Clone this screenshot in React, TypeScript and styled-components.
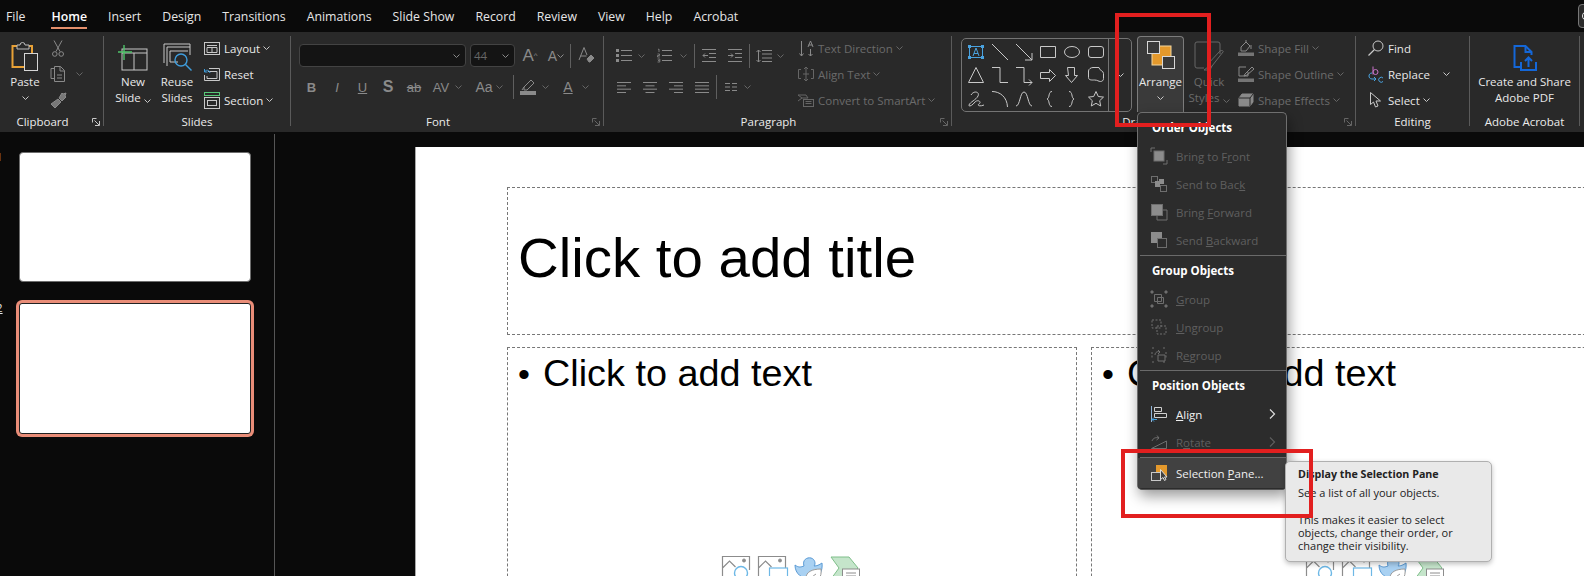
import React from "react";
import styled, { createGlobalStyle } from "styled-components";

const ON = "#c8c8c8";
const OFF = "#8a8a8a";
const DIM = "#666666";
const FONT = `"Open Sans", "Noto Sans", "Liberation Sans", sans-serif`;

const GlobalStyle = createGlobalStyle`
  html, body { margin: 0; padding: 0; background: #0a0a0a; overflow: hidden; }
  body { font-family: ${FONT}; font-size: 12px; }
  * { box-sizing: border-box; }
`;

const Page = styled.div`
  position: relative;
  width: 1584px;
  height: 576px;
  overflow: hidden;
  background: #0a0a0a;
`;

/* ---------- tabs ---------- */
const TabBar = styled.div`
  height: 32px;
  display: flex;
  align-items: center;
  padding-left: 6px;
  gap: 21px;
  color: #ececec;
  font-size: 12.3px;
  overflow: hidden;
`;
const Tab = styled.div<{ $active?: boolean; $first?: boolean }>`
  position: relative;
  height: 32px;
  line-height: 34px;
  white-space: nowrap;
  margin-right: ${(p) => (p.$first ? 5 : 0)}px;
  color: ${(p) => (p.$active ? "#ffffff" : "#e6e6e6")};
  font-weight: ${(p) => (p.$active ? 600 : 400)};
  ${(p) =>
    p.$active &&
    `&::after { content: ""; position: absolute; left: 0; right: 0; bottom: 3px; height: 2px; background: #e48f6c; }`}
`;
const AccountStub = styled.div`
  flex: none;
  margin-left: auto;
  margin-right: -22px;
  width: 28px;
  height: 24px;
  padding: 6px 0 0 3px;
  border: 1px solid #777;
  border-radius: 4px;
  background: #2b2b2b;
`;

/* ---------- ribbon ---------- */
const Ribbon = styled.div`
  height: 100px;
  padding-top: 4px;
  background: #292929;
  display: flex;
  align-items: flex-start;
`;
const GroupBox = styled.div<{ $w: number; $last?: boolean }>`
  flex: none;
  width: ${(p) => p.$w}px;
  height: 90px;
  display: flex;
  flex-direction: column;
  border-right: 1px solid #5a5a5a;
`;
const GroupBody = styled.div<{ $pl?: number }>`
  height: 76px;
  flex: none;
  display: flex;
  padding-left: ${(p) => p.$pl ?? 0}px;
`;
const GroupFooter = styled.div`
  height: 18px;
  flex: none;
  display: flex;
  align-items: center;
`;
const GroupLabel = styled.div`
  flex: 1;
  text-align: center;
  color: #ebebeb;
  font-size: 11.5px;
  white-space: nowrap;
`;
const Launcher = styled.div`
  flex: none;
  width: 18px;
  display: flex;
  justify-content: flex-end;
  padding: 2px 3px 0 0;
`;
const Glyph = styled.svg`
  display: block;
  flex: none;
  fill: none;
  overflow: visible;
`;

const Icon: React.FC<{ w: number; h: number; c?: string; children: React.ReactNode }> = ({ w, h, c = ON, children }) => (
  <Glyph width={w} height={h} viewBox={`0 0 ${w} ${h}`} stroke={c}>
    {children}
  </Glyph>
);

const Chevron: React.FC<{ c?: string }> = ({ c = ON }) => (
  <Icon w={7} h={4} c={c}>
    <path d="M.5.5l3 3 3-3" />
  </Icon>
);
const LaunchIcon: React.FC<{ c?: string }> = ({ c = ON }) => (
  <Icon w={8} h={8} c={c}>
    <path d="M7.5 3v4.5H3M.5.5h4M.5.5v4M2.5 2.5l4.5 4.5" />
  </Icon>
);

const Group: React.FC<{
  w: number;
  label: string;
  pl?: number;
  launcher?: string;
  children: React.ReactNode;
}> = ({ w, label, pl, launcher, children }) => (
  <GroupBox $w={w}>
    <GroupBody $pl={pl}>{children}</GroupBody>
    <GroupFooter>
      <GroupLabel>{label}</GroupLabel>
      {launcher && (
        <Launcher>
          <LaunchIcon c={launcher} />
        </Launcher>
      )}
    </GroupFooter>
  </GroupBox>
);

const BigButton = styled.div<{ $w: number; $ml?: number; $off?: boolean; $open?: boolean }>`
  flex: none;
  width: ${(p) => p.$w}px;
  margin-left: ${(p) => p.$ml ?? 0}px;
  height: 76px;
  display: flex;
  flex-direction: column;
  align-items: center;
  color: ${(p) => (p.$off ? "#6b6b6b" : "#e8e8e8")};
  line-height: 16px;
  font-size: 11.5px;
  text-align: center;
  white-space: nowrap;
  ${(p) => p.$open && `background: #3a3a3a; border: 1px solid #7c7c7c; border-bottom: 0; border-radius: 4px 4px 0 0;`}
`;
const BigIcon = styled.div<{ $open?: boolean }>`
  height: ${(p) => (p.$open ? 37 : 38)}px;
  flex: none;
  display: flex;
  align-items: flex-end;
  padding-bottom: ${(p) => (p.$open ? 5 : 3)}px;
`;
const BigChevron = styled.div`
  height: 16px;
  display: flex;
  align-items: center;
  justify-content: center;
`;
const InlineChevron = styled.span`
  display: inline-block;
  margin-left: 3px;
  vertical-align: middle;
  svg { display: inline-block; }
`;

const RowStack = styled.div<{ $ml?: number; $w?: number }>`
  flex: none;
  width: ${(p) => (p.$w ? `${p.$w}px` : "auto")};
  margin: -1px 0 0 ${(p) => p.$ml ?? 0}px;
  display: flex;
  flex-direction: column;
`;
const SmallRow = styled.div<{ $off?: boolean }>`
  flex: none;
  height: 26px;
  display: flex;
  align-items: center;
  gap: 4px;
  white-space: nowrap;
  font-size: 11.5px;
  color: ${(p) => (p.$off ? "#6b6b6b" : "#e8e8e8")};
`;
const IconSlot = styled.div`
  width: 16px;
  flex: none;
  display: flex;
  justify-content: center;
`;
const TextChevron = styled.span`
  margin-left: -1px;
`;

const FontStack = styled.div`
  display: flex;
  flex-direction: column;
  gap: 8px;
  padding-top: 8px;
`;
const ToolRow = styled.div<{ $h?: number }>`
  height: ${(p) => p.$h ?? 24}px;
  display: flex;
  align-items: center;
`;
const Cell = styled.div<{ $w: number; $ml?: number }>`
  flex: none;
  width: ${(p) => p.$w}px;
  margin-left: ${(p) => p.$ml ?? 0}px;
  display: flex;
  align-items: center;
  justify-content: center;
  color: ${OFF};
  white-space: nowrap;
`;
const Sep = styled.div<{ $ml?: number; $h?: number }>`
  flex: none;
  width: 1px;
  height: ${(p) => p.$h ?? 24}px;
  margin-left: ${(p) => p.$ml ?? 0}px;
  background: #5f5f5f;
`;
const Combo = styled.div<{ $w: number; $ml?: number }>`
  flex: none;
  width: ${(p) => p.$w}px;
  margin-left: ${(p) => p.$ml ?? 0}px;
  height: 23px;
  padding: 0 5px 0 3px;
  display: flex;
  align-items: center;
  justify-content: space-between;
  background: #141414;
  border: 1px solid #434343;
  border-radius: 4px;
  color: #666;
  font-size: 11.5px;
`;
const FontGlyph = styled.span<{ $size?: number; $bold?: boolean; $italic?: boolean; $under?: boolean; $strike?: boolean }>`
  font-family: "Liberation Sans", sans-serif;
  font-size: ${(p) => p.$size ?? 12}px;
  font-weight: ${(p) => (p.$bold ? 700 : 400)};
  font-style: ${(p) => (p.$italic ? "italic" : "normal")};
  text-decoration: ${(p) => (p.$under ? "underline" : p.$strike ? "line-through" : "none")};
  line-height: 1;
`;

const Gallery = styled.div`
  flex: none;
  margin-top: 2px;
  width: 171px;
  height: 74px;
  display: flex;
  border: 1px solid #747474;
  border-radius: 5px;
`;
const GalleryGrid = styled.div`
  width: 146px;
  padding: 1px 0 0 2px;
  display: grid;
  grid-template-columns: repeat(6, 24px);
  grid-auto-rows: 23.5px;
  align-items: center;
  justify-items: center;
`;
const GalleryMore = styled.div`
  flex: 1;
  border-left: 1px solid #747474;
  display: flex;
  align-items: center;
  justify-content: center;
`;

/* ---------- workspace ---------- */
const Workspace = styled.div`
  height: 444px;
  display: flex;
  background: #0a0a0a;
`;
const SlidePanel = styled.div`
  flex: none;
  width: 275px;
  margin-top: 2px;
  padding-top: 18px;
  border-right: 1px solid #555;
  display: flex;
  flex-direction: column;
  gap: 21px;
  overflow: hidden;
`;
const ThumbRow = styled.div`
  display: flex;
  align-items: flex-start;
`;
const ThumbNumber = styled.div<{ $active?: boolean }>`
  flex: none;
  width: 20px;
  margin: -3px 3px 0 -4px;
  color: #e6e6e6;
  font-size: 11.5px;
  line-height: 15px;
  text-decoration: ${(p) => (p.$active ? "underline" : "none")};
`;
const Thumb = styled.div<{ $active?: boolean }>`
  flex: none;
  width: 232px;
  height: ${(p) => (p.$active ? 131 : 130)}px;
  background: #ffffff;
  border-radius: 4px;
  border: 1px solid #6d6d6d;
  ${(p) => p.$active && `border-color: #222; box-shadow: 0 0 0 3px #e98d78; border-radius: 3px;`}
`;
const Stage = styled.div`
  flex: 1;
  min-width: 0;
  padding: 15px 0 0 140px;
  overflow: hidden;
`;
const Slide = styled.div`
  width: 1300px;
  height: 600px;
  padding: 40px 0 0 91px;
  background: #ffffff;
  border-left: 1px solid #a8a8a8;
  font-family: "Liberation Sans", Arial, sans-serif;
  color: #000;
`;
const Placeholder = styled.div<{ $w: number; $h: number }>`
  flex: none;
  width: ${(p) => p.$w}px;
  height: ${(p) => p.$h}px;
  border: 1px dashed #777;
`;
const TitleBox = styled(Placeholder)`
  padding: 0 0 8px 10px;
  display: flex;
  align-items: center;
  font-size: 56.4px;
  white-space: nowrap;
`;
const Columns = styled.div`
  margin-top: 12px;
  display: flex;
  gap: 14px;
`;
const BodyLine = styled.div`
  padding: 4px 0 0 10px;
  height: 46px;
  line-height: 42px;
  font-size: 37.8px;
  white-space: nowrap;
`;
const Bullet = styled.span`
  display: inline-block;
  width: 25px;
  font-size: 34px;
`;
const ContentIcons = styled.div`
  margin-top: 162px;
  display: flex;
  justify-content: center;
  gap: 8px;
  padding-right: 2px;
`;

/* ---------- arrange menu ---------- */
const Menu = styled.div`
  position: absolute;
  left: 1137px;
  top: 112px;
  width: 150px;
  height: 378px;
  background: #2c2c2c;
  border: 1px solid #6f6f6f;
  border-bottom-color: #555;
  border-radius: 5px;
  box-shadow: 2px 6px 14px rgba(0, 0, 0, 0.4);
`;
const MenuHeader = styled.div`
  height: 29px;
  padding: 0 0 1px 14px;
  display: flex;
  align-items: center;
  color: #fff;
  font-weight: 700;
  font-size: 11.5px;
`;
const MenuItem = styled.div<{ $off?: boolean; $hot?: boolean }>`
  height: ${(p) => (p.$hot ? 30 : 28)}px;
  display: flex;
  align-items: center;
  font-size: 11.5px;
  white-space: nowrap;
  color: ${(p) => (p.$off ? "#5f5f5f" : "#f0f0f0")};
  background: ${(p) => (p.$hot ? "#414141" : "transparent")};
`;
const MenuIcon = styled.div`
  flex: none;
  width: 38px;
  padding-left: 13px;
`;
const MenuText = styled.div`
  flex: 1;
`;
const MenuArrow = styled.div`
  flex: none;
  width: 17px;
`;
const MenuDivider = styled.div`
  height: 1px;
  margin: 1px 0 0 2px;
  background: #6a6a6a;
`;

/* ---------- tooltip + annotations ---------- */
const Tooltip = styled.div`
  position: absolute;
  left: 1285px;
  top: 461px;
  width: 207px;
  height: 101px;
  padding: 6px 10px 0 12px;
  background: #e9e9e9;
  border: 1px solid #b0b0b0;
  border-radius: 5px;
  color: #222;
  font-size: 11px;
  line-height: 13px;
  box-shadow: 0 2px 5px rgba(0, 0, 0, 0.25);
`;
const TooltipTitle = styled.div`
  font-weight: 700;
  font-size: 10.7px;
  margin-bottom: 5px;
`;
const TooltipGap = styled.div`
  height: 14px;
`;
const RedFrame = styled.div<{ $x: number; $y: number; $w: number; $h: number }>`
  position: absolute;
  left: ${(p) => p.$x}px;
  top: ${(p) => p.$y}px;
  width: ${(p) => p.$w}px;
  height: ${(p) => p.$h}px;
  border: 4px solid #e21f1f;
`;

/* ---------- icons ---------- */
const Paste = () => (
  <Icon w={28} h={30}>
    <path d="M7 5H1.5v21H13M16 5h5v7" stroke="#e8a136" strokeWidth={2} />
    <path d="M6 8V4h3a2.5 2.5 0 0 1 5 0h4v4z" stroke="#bdbdbd" fill="#292929" />
    <rect x={13.5} y={12.5} width={13} height={17} stroke="#d6d6d6" fill="#292929" />
  </Icon>
);
const Cut = () => (
  <Icon w={12} h={17} c={OFF}>
    <path d="M2 .5l6 11M10 .5l-6 11" />
    <circle cx={2.8} cy={14} r={2.3} />
    <circle cx={9.2} cy={14} r={2.3} />
  </Icon>
);
const Copy = () => (
  <Icon w={16} h={16} c={OFF}>
    <path d="M5 2.5H1v10h3" />
    <path d="M4.5.5h6l4 4v11h-10zM10 .5v4.5h4.5M7 9h5M7 12h5" />
  </Icon>
);
const Painter = () => (
  <Icon w={17} h={17} c={OFF}>
    <path d="M9 6l3 3 4-4-1-1 1-3-3 1-1-1zM8 7l-7 5 4 4 6-6z" fill="#777" />
  </Icon>
);
const NewSlide = () => (
  <Icon w={30} h={26}>
    <rect x={4} y={4} width={25} height={21} />
    <path d="M4 8h25M16 8v17" />
    <path d="M6 0v15M0 7h14" stroke="#4fc46a" strokeWidth={1.4} />
  </Icon>
);
const Reuse = () => (
  <Icon w={30} h={28}>
    <path d="M2 20V1h26v3M5 23V4h23v8" />
    <path d="M8 19V8h18" />
    <path d="M8 19h8" />
    <circle cx={19} cy={17} r={6} stroke="#3f9ddc" strokeWidth={1.4} />
    <path d="M23.5 21.5l6 6" stroke="#3f9ddc" strokeWidth={1.4} />
  </Icon>
);
const Layout = () => (
  <Icon w={16} h={13}>
    <rect x={.5} y={.5} width={15} height={12} />
    <path d="M3 3.5h10M3 5.5h10v5H3zM8 5.5v5" />
  </Icon>
);
const Reset = () => (
  <Icon w={16} h={13}>
    <path d="M5 .5h10.500v12H.5V7M4 3.500h9v7H3V8" />
    <path d="M6 5C5 1.500 2 1.500 .5 4M.5 1v3h3" stroke="#3f9ddc" />
  </Icon>
);
const Section = () => (
  <Icon w={16} h={17}>
    <rect x={.5} y={.5} width={15} height={3} stroke="#58c878" />
    <rect x={.5} y={5.5} width={15} height={11} />
    <rect x={3.5} y={8.500} width={9} height={5} />
  </Icon>
);
const Highlighter = () => (
  <Icon w={16} h={16} c={OFF}>
    <path d="M4 8l7-7 3 3-7 7H4zM2 11l2-3" />
    <rect x={0} y={12} width={16} height={4} fill="#8a8a8a" stroke="none" />
  </Icon>
);
const ClearFormat = () => (
  <Icon w={17} h={17} c={OFF}>
    <path d="M1 13L6 .5 9 8M2.500 9h6" />
    <path d="M9 12l4-4 3 3-4 4h-1z" fill="#8a8a8a" />
  </Icon>
);
const Lines: React.FC<{ rows: [number, number][]; w: number; h?: number }> = ({ rows, w, h = 13 }) => (
  <Icon w={w} h={h} c={OFF}>
    <path d={rows.map(([x, l], i) => `M${x} ${1.5 + (i * (h - 3)) / (rows.length - 1)}h${l}`).join("")} />
  </Icon>
);
const Bullets = () => (
  <Icon w={16} h={13} c={OFF}>
    <path d="M5 1.500h11M5 6.500h11M5 11.500h11" />
    <path d="M0 0h3v3H0zM0 5h3v3H0zM0 10h3v3H0z" fill="#8a8a8a" stroke="none" />
  </Icon>
);
const Numbered = () => (
  <Icon w={15} h={13} c={OFF}>
    <path d="M5 1.500h10M5 6.500h10M5 11.500h10" />
    <path d="M1 .5l1-.5v3M.5 5h2v1.500h-2V8h2.300M.5 10h2.300v3H.500M1 11.500h1.500" strokeWidth={.8} />
  </Icon>
);
const Indent: React.FC<{ flip?: boolean }> = ({ flip }) => (
  <Icon w={14} h={13} c={OFF}>
    <path d="M0 .5h14M7 4.500h7M7 8.500h7M0 12.500h14" />
    <path d={flip ? "M0 6.500h5M3 4.500l2 2-2 2" : "M6 6.500H1M3 4.500l-2 2 2 2"} />
  </Icon>
);
const LineSpacing = () => (
  <Icon w={16} h={14} c={OFF}>
    <path d="M6 1.500h10M6 5h10M6 9h10M6 12.500h10M2.500 1v12M.5 3l2-2 2 2M.5 11l2 2 2-2" />
  </Icon>
);
const ColumnsIcon = () => (
  <Icon w={12} h={8} c={OFF}>
    <path d="M0 .5h5M7 .5h5M0 4h5M7 4h5M0 7.500h5M7 7.500h5" />
  </Icon>
);
const TextDirection = () => (
  <Icon w={14} h={17} c={OFF}>
    <path d="M2.500 1v15M.5 13.500l2 2.500 2-2.500M9 7l2.500-6L14 7M9.500 5h4M11.500 9v7M9.500 14l2 2 2-2" />
  </Icon>
);
const AlignText = () => (
  <Icon w={16} h={14} c={DIM}>
    <path d="M3 2.500H.5v9H3M13 2.500h2.500v9H13M8 0v14M6 2l2-2 2 2M6 12l2 2 2-2M5 7h6" />
  </Icon>
);
const SmartArt = () => (
  <Icon w={16} h={13} c={DIM}>
    <path d="M0 1h8l2 3H4zM0 7l4-3" />
    <rect x={5.500} y={5.500} width={10} height={7} fill="#292929" />
    <path d="M7.500 7.500h6M7.500 9.500h6" />
  </Icon>
);

const TextBoxShape = () => (
  <Icon w={16} h={14}>
    <rect x={1.5} y={1.5} width={13} height={11} stroke="#4aa3e0" />
    <path d="M5 11l3-8 3 8M6 8.500h4" stroke="#4aa3e0" />
    <path d="M0 0h3v3H0zM13 0h3v3h-3zM0 11h3v3H0zM13 11h3v3h-3z" fill="#4aa3e0" stroke="none" />
  </Icon>
);
const ShapePath: React.FC<{ d: string; w?: number; h?: number }> = ({ d, w = 16, h = 16 }) => (
  <Icon w={w} h={h}>
    <path d={d} />
  </Icon>
);
const SHAPE_PATHS: { d: string; w?: number; h?: number }[] = [
  { d: "M0 0l16 16" },
  { d: "M0 0l16 16M16 9v7H9" },
  { d: "M.5.5h15v11H.5z", h: 12 },
  { d: "M.5 6a7.500 5.500 0 1 0 15 0a7.500 5.500 0 1 0-15 0z", h: 12 },
  { d: "M3 .5h10a2.500 2.500 0 0 1 2.500 2.500v6a2.500 2.500 0 0 1-2.500 2.500H3A2.500 2.500 0 0 1 .5 9V3A2.500 2.500 0 0 1 3 .5z", h: 12 },
  { d: "M8 .5L15.500 15.500H.5z" },
  { d: "M0 .5h8v15h8" },
  { d: "M0 .5h8v15h8M13 12.500l3 3-3 3" },
  { d: "M.5 3.500h9V.5l6 6-6 6v-3h-9z", h: 13 },
  { d: "M3.500.5h7v8h3l-6 7-6-7h3z" },
  { d: "M5 .5h6c0 3 4.500 3 4.500 6v5c0 2-1.500 3-3 3-2 0-3-1.500-6-1.500-2 0-6 .5-6-2.500V4C.5 2 3 .5 5 .5z" },
  { d: "M3 4c3-5 9-3 7 1S2 11 1 14c-.5 2 3 1 6-3 3-3 7 0 4 2-2 1 0 3 5 1" },
  { d: "M0 .5C8 .5 15 6 15.500 16" },
  { d: "M0 15C4 15 4 1 8 1s4 14 8 14" },
  { d: "M8 .5C4 .5 6 7 3 8c3 1 1 7.500 5 7.500", w: 9 },
  { d: "M1 .5C5 .5 3 7 6 8c-3 1-1 7.500-5 7.500", w: 9 },
  { d: "M8 .5l2.300 5 5.200.6-3.800 3.600 1 5.300L8 12.300 3.300 15l1-5.300L.5 6.100l5.200-.6z" },
];

const Arrange = () => (
  <Icon w={28} h={28}>
    <rect x={5} y={5} width={19} height={19} fill="#e4992c" stroke="#f4d7a0" />
    <rect x={.5} y={.5} width={12} height={12} fill="#3a3a3a" stroke="#d8d8d8" />
    <rect x={15.5} y={15.5} width={12} height={12} fill="#3a3a3a" stroke="#d8d8d8" />
  </Icon>
);
const QuickStyles = () => (
  <Icon w={30} h={30} c={DIM}>
    <path d="M10 27H3a2 2 0 0 1-2-2V3a2 2 0 0 1 2-2h21a2 2 0 0 1 2 2v10" />
    <path d="M29 11L18 25c-1 1-3 1-4 0l-1-1 13-14c2-1 4 0 3 1zM14 26l-4 3h6l2-4" />
  </Icon>
);
const ShapeFill = () => (
  <Icon w={16} h={16} c={OFF}>
    <path d="M3 7l5-5 4 4-4 5H3zM8 2V0M13 5v4" />
    <rect x={0} y={12.500} width={16} height={3.500} fill="#757575" stroke="none" />
  </Icon>
);
const ShapeOutline = () => (
  <Icon w={16} h={16} c={OFF}>
    <path d="M8 1H1v9h9V6M7 8l7-7 2 2-7 6-3 1z" />
    <rect x={0} y={12.500} width={16} height={3.500} fill="#757575" stroke="none" />
  </Icon>
);
const ShapeEffects = () => (
  <Icon w={16} h={14} c={OFF}>
    <path d="M4 1h11v8l-3 4H1V5z" fill="#8a8a8a" />
    <path d="M1 5h11v8M12 5l3-4" stroke="#292929" />
  </Icon>
);
const Find = () => (
  <Icon w={16} h={16}>
    <circle cx={10} cy={6} r={5} />
    <path d="M6.500 9.500L.5 15.500" strokeWidth={1.3} />
  </Icon>
);
const Replace = () => (
  <Icon w={16} h={17}>
    <path d="M5 .5v8" stroke="#c873c8" />
    <circle cx={7.500} cy={6} r={2.500} stroke="#c873c8" />
    <path d="M15 12a2.500 2.500 0 1 0 0 3.500" stroke="#4aa3e0" />
    <path d="M4 7C0 7 0 13 4 13h4M6 11l2 2-2 2" stroke="#4aa3e0" />
  </Icon>
);
const Cursor = () => (
  <Icon w={12} h={16}>
    <path d="M.5.5v12l3-2.500 2 5 2.500-1-2-5h4.500z" />
  </Icon>
);
const AdobeShare = () => (
  <Icon w={24} h={26} c="#1467d8">
    <path d="M9 22H1.500V1h11l6 6v3" strokeWidth={2} />
    <path d="M12.500 1v6h6" strokeWidth={2} />
    <path d="M8 17v8h15v-8M15.500 22v-9M12 16l3.500-3.500L19 16" strokeWidth={2} />
  </Icon>
);

const MI_ON = "#d0d0d0";
const MI_OFF = "#6e6e6e";
const BringFront = () => (
  <Icon w={16} h={16} c={MI_OFF}>
    <path d="M0 4V0h4M12 16h4v-4" />
    <rect x={3} y={3} width={10} height={10} fill="#8c8c8c" />
  </Icon>
);
const SendBack = () => (
  <Icon w={16} h={16} c={MI_OFF}>
    <rect x={.5} y={.5} width={6} height={6} />
    <rect x={9.500} y={9.500} width={6} height={6} />
    <rect x={4} y={5} width={5} height={6} fill="#8c8c8c" stroke="none" />
    <rect x={8} y={3} width={5} height={5} fill="#8c8c8c" stroke="none" />
  </Icon>
);
const BringForward = () => (
  <Icon w={16} h={16} c={MI_OFF}>
    <path d="M12 6h4v10H6v-4" />
    <rect x={.5} y={.5} width={11} height={11} fill="#8c8c8c" />
  </Icon>
);
const SendBackward = () => (
  <Icon w={16} h={16} c={MI_OFF}>
    <rect x={0} y={0} width={11} height={11} fill="#8c8c8c" stroke="none" />
    <rect x={6.500} y={6.500} width={9} height={9} fill="#2c2c2c" />
  </Icon>
);
const GroupIcon = () => (
  <Icon w={16} h={16} c={MI_OFF}>
    <path d="M0 0h2v2H0zM14 0h2v2h-2zM0 14h2v2H0zM14 14h2v2h-2z" fill="#6e6e6e" />
    <path d="M3.500 3.500h7v7h-7zM6.500 6.500h6v6h-6z" />
  </Icon>
);
const UngroupIcon = () => (
  <Icon w={16} h={16} c={MI_OFF} >
    <path d="M1 1h9v8H1zM6 7h9v8H6z" strokeDasharray="2 1.500" />
  </Icon>
);
const RegroupIcon = () => (
  <Icon w={16} h={16} c={MI_OFF}>
    <path d="M1 1h3M12 1h3M1 5v7M15 5v7M1 15h3M12 15h3" strokeDasharray="2 1.500" />
    <path d="M7 8h7v6H7zM4 8c0-3 3-4 5-3M7 3l2 2-2 2" />
  </Icon>
);
const AlignIcon = () => (
  <Icon w={16} h={16} c={MI_ON}>
    <path d="M.5 0v16" stroke="#8fb4d8" />
    <path d="M3.500 1.500h7v4h-7zM3.500 7.500h12v4h-12z" />
    <path d="M1 13.500h5M3 11.500l-2 2 2 2" stroke="#3f9ddc" />
  </Icon>
);
const RotateIcon = () => (
  <Icon w={16} h={14} c={MI_OFF}>
    <path d="M.5 13.500L15.500 6v7.500zM1 6c1-3 4-4 7-3M6 .5L8 3 5.500 5" />
  </Icon>
);
const SelectionPaneIcon = () => (
  <Icon w={16} h={16}>
    <rect x={5} y={0} width={11} height={11} fill="#e4992c" stroke="none" />
    <rect x={.5} y={7.500} width={9} height={8} fill="#414141" />
    <path d="M9.500 4.500v10l2.500-2 1.500 3 1.500-1-1.500-2.500h2.500z" fill="#414141" stroke="#ddd" />
  </Icon>
);
const MenuChevron: React.FC<{ c: string }> = ({ c }) => (
  <Icon w={6} h={10} c={c}>
    <path d="M1 .5l4.500 4.500L1 9.500" strokeWidth={1.2} />
  </Icon>
);

const PictureIcon: React.FC<{ accent: "circle" | "rect" }> = ({ accent }) => (
  <Icon w={28} h={32} c="#8c8c8c">
    <path d="M.5 22V.5h27V14M.5 12l7-7 6 6" strokeWidth={1.2} />
    <circle cx={22} cy={4.500} r={1.500} fill="#8c8c8c" />
    {accent === "circle" ? (
      <circle cx={19} cy={17} r={6.500} stroke="#6db8e6" strokeWidth={1.4} fill="#fff" />
    ) : (
      <rect x={11.500} y={12} width={18} height={14} stroke="#6db8e6" strokeWidth={1.2} fill="#fff" />
    )}
  </Icon>
);
const DuckIcon = () => (
  <Icon w={29} h={32} c="#5b9bd5">
    <path d="M1 9c4 3 6 2 9 1-2-6 3-9 7-8 4 1 5 6 3 8 3 0 5-1 8-3 1 8-3 16-11 16C8 23 1 18 1 9z" fill="#a9d1f2" />
    <path d="M12 22c0-6 6-9 15-9 1 8-3 13-8 13-4 0-7-1-7-4zM14 26c2-4 5-6 8-8" stroke="#9a9a9a" fill="#fff" />
  </Icon>
);
const SmartArtIcon = () => (
  <Icon w={29} h={32} c="#7fbf8a">
    <path d="M0 1h18l9 11-9 11H0l8-11z" fill="#c5e5cb" />
    <rect x={11.500} y={13} width={17} height={15} fill="#fff" stroke="#8c8c8c" />
    <path d="M15 17h10M15 20h10" stroke="#8c8c8c" />
  </Icon>
);
const PlaceholderIcons = () => (
  <ContentIcons>
    <PictureIcon accent="circle" />
    <PictureIcon accent="rect" />
    <DuckIcon />
    <SmartArtIcon />
  </ContentIcons>
);

const TABS = ["File", "Home", "Insert", "Design", "Transitions", "Animations", "Slide Show", "Record", "Review", "View", "Help", "Acrobat"];

const ORDER_ITEMS: [React.ReactNode, React.ReactNode][] = [
  [<BringFront />, <>Bring to F<u>r</u>ont</>],
  [<SendBack />, <>Send to Bac<u>k</u></>],
  [<BringForward />, <>Bring <u>F</u>orward</>],
  [<SendBackward />, <>Send <u>B</u>ackward</>],
];
const GROUP_ITEMS: [React.ReactNode, React.ReactNode][] = [
  [<GroupIcon />, <><u>G</u>roup</>],
  [<UngroupIcon />, <><u>U</u>ngroup</>],
  [<RegroupIcon />, <>R<u>e</u>group</>],
];

const App: React.FC = () => (
  <Page>
    <GlobalStyle />
    <TabBar>
      {TABS.map((t) => (
        <Tab key={t} $active={t === "Home"} $first={t === "File"}>
          {t}
        </Tab>
      ))}
      <AccountStub>
        <Icon w={10} h={10} c="#e8e8e8">
          <circle cx={5} cy={5} r={4.5} />
        </Icon>
      </AccountStub>
    </TabBar>

    <Ribbon>
      <Group w={104} label="Clipboard" launcher={ON}>
        <BigButton $w={50}>
          <BigIcon>
            <Paste />
          </BigIcon>
          Paste
          <BigChevron>
            <Chevron />
          </BigChevron>
        </BigButton>
        <RowStack>
          <SmallRow><IconSlot><Cut /></IconSlot></SmallRow>
          <SmallRow>
            <IconSlot><Copy /></IconSlot>
            <Cell $w={7} $ml={6}><Chevron c={DIM} /></Cell>
          </SmallRow>
          <SmallRow><IconSlot><Painter /></IconSlot></SmallRow>
        </RowStack>
      </Group>

      <Group w={187} label="Slides">
        <BigButton $w={58}>
          <BigIcon><NewSlide /></BigIcon>
          New
          <span>Slide<InlineChevron><Chevron /></InlineChevron></span>
        </BigButton>
        <BigButton $w={30}>
          <BigIcon><Reuse /></BigIcon>
          Reuse
          <span>Slides</span>
        </BigButton>
        <RowStack $ml={12}>
          <SmallRow><IconSlot><Layout /></IconSlot>Layout<TextChevron><Chevron /></TextChevron></SmallRow>
          <SmallRow><IconSlot><Reset /></IconSlot>Reset</SmallRow>
          <SmallRow><IconSlot><Section /></IconSlot>Section<TextChevron><Chevron /></TextChevron></SmallRow>
        </RowStack>
      </Group>

      <Group w={313} label="Font" pl={8} launcher={DIM}>
        <FontStack>
          <ToolRow $h={23}>
            <Combo $w={167}><span /><Chevron c={OFF} /></Combo>
            <Combo $w={45} $ml={4}>44<Chevron c={OFF} /></Combo>
            <Cell $w={26} $ml={2}><FontGlyph $size={17}>A</FontGlyph><FontGlyph $size={8}>^</FontGlyph></Cell>
            <Cell $w={26}><FontGlyph $size={14}>A</FontGlyph><Chevron c={OFF} /></Cell>
            <Sep $ml={1} />
            <Cell $w={30}><ClearFormat /></Cell>
          </ToolRow>
          <ToolRow>
            <Cell $w={25}><FontGlyph $bold $size={13}>B</FontGlyph></Cell>
            <Cell $w={26}><FontGlyph $italic $size={13}>I</FontGlyph></Cell>
            <Cell $w={25}><FontGlyph $under $size={13}>U</FontGlyph></Cell>
            <Cell $w={26}><FontGlyph $bold $size={16}>S</FontGlyph></Cell>
            <Cell $w={26}><FontGlyph $strike $size={13}>ab</FontGlyph></Cell>
            <Cell $w={28}><FontGlyph $size={13}>AV</FontGlyph></Cell>
            <Cell $w={7}><Chevron c={DIM} /></Cell>
            <Cell $w={24} $ml={10}><FontGlyph $size={14}>Aa</FontGlyph></Cell>
            <Cell $w={7}><Chevron c={DIM} /></Cell>
            <Sep $ml={10} />
            <Cell $w={16} $ml={6}><Highlighter /></Cell>
            <Cell $w={7} $ml={6}><Chevron c={DIM} /></Cell>
            <Cell $w={16} $ml={11}><FontGlyph $under $size={14}>A</FontGlyph></Cell>
            <Cell $w={7} $ml={6}><Chevron c={DIM} /></Cell>
          </ToolRow>
        </FontStack>
      </Group>

      <Group w={348} label="Paragraph" pl={12} launcher={DIM}>
        <FontStack>
          <ToolRow $h={23}>
            <Cell $w={16}><Bullets /></Cell>
            <Cell $w={19}><Chevron c={DIM} /></Cell>
            <Cell $w={15} $ml={6}><Numbered /></Cell>
            <Cell $w={22}><Chevron c={DIM} /></Cell>
            <Sep />
            <Cell $w={14} $ml={7}><Indent /></Cell>
            <Cell $w={14} $ml={12}><Indent flip /></Cell>
            <Sep $ml={7} />
            <Cell $w={16} $ml={6}><LineSpacing /></Cell>
            <Cell $w={16}><Chevron c={DIM} /></Cell>
          </ToolRow>
          <ToolRow>
            <Cell $w={14} $ml={1}><Lines w={14} rows={[[0, 14], [0, 9], [0, 14], [0, 9]]} /></Cell>
            <Cell $w={14} $ml={12}><Lines w={14} rows={[[0, 14], [2.5, 9], [0, 14], [2.5, 9]]} /></Cell>
            <Cell $w={14} $ml={12}><Lines w={14} rows={[[0, 14], [5, 9], [0, 14], [5, 9]]} /></Cell>
            <Cell $w={14} $ml={12}><Lines w={14} rows={[[0, 14], [0, 14], [0, 14], [0, 14]]} /></Cell>
            <Sep $ml={7} />
            <Cell $w={12} $ml={8}><ColumnsIcon /></Cell>
            <Cell $w={20}><Chevron c={DIM} /></Cell>
          </ToolRow>
        </FontStack>
        <RowStack $w={180} $ml={10}>
          <SmallRow $off><IconSlot><TextDirection /></IconSlot>Text Direction<TextChevron><Chevron c={DIM} /></TextChevron></SmallRow>
          <SmallRow $off><IconSlot><AlignText /></IconSlot>Align Text<TextChevron><Chevron c={DIM} /></TextChevron></SmallRow>
          <SmallRow $off><IconSlot><SmartArt /></IconSlot>Convert to SmartArt<TextChevron><Chevron c={DIM} /></TextChevron></SmallRow>
        </RowStack>
      </Group>

      <Group w={404} label="Drawing" pl={9} launcher={DIM}>
        <Gallery>
          <GalleryGrid>
            <TextBoxShape />
            {SHAPE_PATHS.map((s) => (
              <ShapePath key={s.d} d={s.d} w={s.w} h={s.h} />
            ))}
          </GalleryGrid>
          <GalleryMore><Chevron /></GalleryMore>
        </Gallery>
        <BigButton $w={47} $ml={5} $open>
          <BigIcon $open><Arrange /></BigIcon>
          Arrange
          <BigChevron><Chevron /></BigChevron>
        </BigButton>
        <BigButton $w={48} $ml={1} $off>
          <BigIcon><QuickStyles /></BigIcon>
          Quick
          <span>Styles<InlineChevron><Chevron c={DIM} /></InlineChevron></span>
        </BigButton>
        <RowStack $ml={5}>
          <SmallRow $off><IconSlot><ShapeFill /></IconSlot>Shape Fill<TextChevron><Chevron c={DIM} /></TextChevron></SmallRow>
          <SmallRow $off><IconSlot><ShapeOutline /></IconSlot>Shape Outline<TextChevron><Chevron c={DIM} /></TextChevron></SmallRow>
          <SmallRow $off><IconSlot><ShapeEffects /></IconSlot>Shape Effects<TextChevron><Chevron c={DIM} /></TextChevron></SmallRow>
        </RowStack>
      </Group>

      <Group w={114} label="Editing" pl={12}>
        <RowStack>
          <SmallRow><IconSlot><Find /></IconSlot>Find</SmallRow>
          <SmallRow>
            <IconSlot><Replace /></IconSlot>Replace
            <Cell $w={7} $ml={9}><Chevron /></Cell>
          </SmallRow>
          <SmallRow><IconSlot><Cursor /></IconSlot>Select<TextChevron><Chevron /></TextChevron></SmallRow>
        </RowStack>
      </Group>

      <Group w={110} label="Adobe Acrobat">
        <BigButton $w={109}>
          <BigIcon><AdobeShare /></BigIcon>
          Create and Share
          <span>Adobe PDF</span>
        </BigButton>
      </Group>
    </Ribbon>

    <Workspace>
      <SlidePanel>
        <ThumbRow>
          <ThumbNumber>1</ThumbNumber>
          <Thumb />
        </ThumbRow>
        <ThumbRow>
          <ThumbNumber $active>2</ThumbNumber>
          <Thumb $active />
        </ThumbRow>
      </SlidePanel>
      <Stage>
        <Slide>
          <TitleBox $w={1154} $h={148}>Click to add title</TitleBox>
          <Columns>
            <Placeholder $w={570} $h={300}>
              <BodyLine><Bullet>•</Bullet>Click to add text</BodyLine>
              <PlaceholderIcons />
            </Placeholder>
            <Placeholder $w={570} $h={300}>
              <BodyLine><Bullet>•</Bullet>Click to add text</BodyLine>
              <PlaceholderIcons />
            </Placeholder>
          </Columns>
        </Slide>
      </Stage>
    </Workspace>

    <Menu>
      <MenuHeader>Order Objects</MenuHeader>
      {ORDER_ITEMS.map(([icon, text], i) => (
        <MenuItem $off key={i}><MenuIcon>{icon}</MenuIcon><MenuText>{text}</MenuText></MenuItem>
      ))}
      <MenuDivider />
      <MenuHeader>Group Objects</MenuHeader>
      {GROUP_ITEMS.map(([icon, text], i) => (
        <MenuItem $off key={i}><MenuIcon>{icon}</MenuIcon><MenuText>{text}</MenuText></MenuItem>
      ))}
      <MenuDivider />
      <MenuHeader>Position Objects</MenuHeader>
      <MenuItem>
        <MenuIcon><AlignIcon /></MenuIcon>
        <MenuText><u>A</u>lign</MenuText>
        <MenuArrow><MenuChevron c="#e0e0e0" /></MenuArrow>
      </MenuItem>
      <MenuItem $off>
        <MenuIcon><RotateIcon /></MenuIcon>
        <MenuText>R<u>o</u>tate</MenuText>
        <MenuArrow><MenuChevron c="#5f5f5f" /></MenuArrow>
      </MenuItem>
      <MenuDivider />
      <MenuItem $hot>
        <MenuIcon><SelectionPaneIcon /></MenuIcon>
        <MenuText>Selection <u>P</u>ane...</MenuText>
      </MenuItem>
    </Menu>

    <Tooltip>
      <TooltipTitle>Display the Selection Pane</TooltipTitle>
      <div>See a list of all your objects.</div>
      <TooltipGap />
      <div>This makes it easier to select</div>
      <div>objects, change their order, or</div>
      <div>change their visibility.</div>
    </Tooltip>

    <RedFrame $x={1115} $y={13} $w={96} $h={114} />
    <RedFrame $x={1121} $y={449} $w={192} $h={69} />
  </Page>
);

export default App;
